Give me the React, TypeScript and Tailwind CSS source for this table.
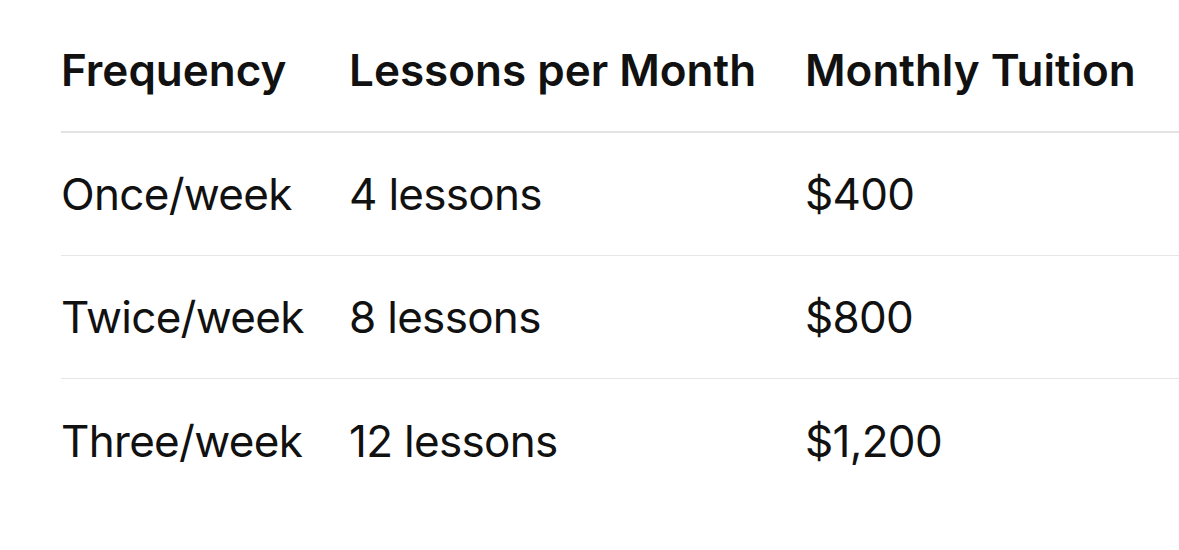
export default function App() {
  const rows = [
    ["Once/week", "4 lessons", "$400"],
    ["Twice/week", "8 lessons", "$800"],
    ["Three/week", "12 lessons", "$1,200"],
  ];
  return (
    <div className="w-[1179px] h-[550px] bg-white overflow-hidden pl-[61px] pt-[8px] text-[#111111]" style={{ fontFamily: "Inter, 'Noto Sans', sans-serif" }}>
      <div className="w-[1200px]">
        <div className="grid grid-cols-[288px_456px_1fr] h-[125px] items-center border-b-2 border-[#e3e3e3] text-[44px] font-semibold tracking-[0px]">
          <div>Frequency</div>
          <div>Lessons per Month</div>
          <div>Monthly Tuition</div>
        </div>
        {rows.map((r, i) => (
          <div
            key={i}
            className={`grid grid-cols-[288px_456px_1fr] h-[123px] items-center text-[44px] font-normal tracking-[-0.7px] ${i < rows.length - 1 ? "border-b border-[#e6e6e6]" : ""}`}
          >
            <div>{r[0]}</div>
            <div>{r[1]}</div>
            <div>{r[2]}</div>
          </div>
        ))}
      </div>
    </div>
  );
}
